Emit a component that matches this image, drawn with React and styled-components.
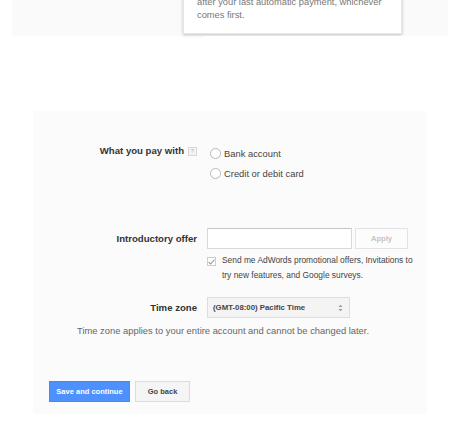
import React from "react"
import styled, { createGlobalStyle } from "styled-components"

const GlobalStyle = createGlobalStyle`
  html, body {
    margin: 0;
    padding: 0;
    background: #fff;
    font-family: "Liberation Sans", Arial, sans-serif;
    overflow: hidden;
  }
`

const Page = styled.div`
  width: 467px;
  height: 421px;
  display: flex;
  flex-direction: column;
`

const TopPanel = styled.div`
  margin-left: 12px;
  width: 436px;
  height: 36px;
  background: #fafafa;
  padding-left: 171px;
  box-sizing: border-box;
`

const Tooltip = styled.div`
  margin-top: -4px;
  width: 219px;
  box-sizing: border-box;
  padding: 0 10px 11px 13px;
  background: #fff;
  border: 1px solid #e6e6e6;
  border-top: none;
  box-shadow: 0 1px 3px rgba(0, 0, 0, 0.22);
  font-size: 9.3px;
  line-height: 13px;
  color: #777;
`

const Gap = styled.div`
  height: 75px;
  display: flex;
`

const HiddenCard = styled.div`
  margin-left: 203px;
  width: 223px;
  height: 75px;
  background: #fff;
  border-bottom: 1px solid #e2e2e2;
  box-shadow: 0 3px 2px -2px rgba(0, 0, 0, 0.2);
`

const Panel = styled.div`
  margin-left: 33px;
  width: 394px;
  height: 303px;
  background: #fbfbfb;
  box-sizing: border-box;
  padding-top: 32px;
  display: flex;
  flex-direction: column;
`

const Row = styled.div`
  display: flex;
  align-items: ${(p) => (p.$center ? "center" : "flex-start")};
  gap: 10px;
  margin-top: ${(p) => p.$top || 0}px;
`

const Label = styled.div`
  width: 164px;
  flex: none;
  display: flex;
  justify-content: flex-end;
  align-items: center;
  gap: 4px;
  font-size: 9.6px;
  font-weight: bold;
  line-height: 16px;
  color: #333;
`

const HelpIcon = styled.span`
  width: 7px;
  height: 7px;
  border: 1px solid #d8d8d8;
  background: #f3f3f3;
  color: #aaa;
  font-size: 5px;
  line-height: 7px;
  text-align: center;
  font-weight: normal;
`

const Options = styled.div`
  display: flex;
  flex-direction: column;
`

const Option = styled.label`
  height: 20px;
  display: flex;
  align-items: center;
  gap: 3px;
  padding-left: 3px;
  font-size: 9.4px;
  color: #444;
`

const Radio = styled.span`
  width: 9px;
  height: 9px;
  border: 1px solid #b8b8b8;
  border-radius: 50%;
  background: #fff;
`

const Input = styled.div`
  width: 145px;
  height: 21px;
  box-sizing: border-box;
  background: #fff;
  border: 1px solid #d9d9d9;
  border-top-color: #c6c6c6;
`

const ApplyButton = styled.div`
  margin-left: -7px;
  width: 53px;
  height: 21px;
  box-sizing: border-box;
  border: 1px solid #e3e3e3;
  background: #fcfcfc;
  color: #c4c4c4;
  font-size: 7.6px;
  font-weight: bold;
  display: flex;
  align-items: center;
  justify-content: center;
`

const CheckRow = styled.div`
  display: flex;
  margin-top: 4px;
  margin-left: 174px;
  gap: 6px;
`

const CheckBox = styled.span`
  flex: none;
  margin-top: 4px;
  width: 9px;
  height: 9px;
  box-sizing: border-box;
  border: 1px solid #cfcfcf;
  background: #fff;
  display: flex;
  align-items: center;
  justify-content: center;
`

const CheckText = styled.div`
  width: 196px;
  font-size: 8.4px;
  line-height: 15px;
  color: #444;
`

const Select = styled.div`
  width: 143px;
  height: 21px;
  box-sizing: border-box;
  padding: 0 6px 0 5px;
  background: #f4f4f4;
  border: 1px solid #dedede;
  display: flex;
  align-items: center;
  justify-content: space-between;
  font-size: 7.8px;
  font-weight: bold;
  color: #444;
`

const Note = styled.div`
  margin: 5px 0 0 44px;
  font-size: 9.4px;
  line-height: 15px;
  color: #666;
`

const Buttons = styled.div`
  display: flex;
  gap: 5px;
  margin: 43px 0 0 16px;
`

const Button = styled.div`
  height: 21px;
  box-sizing: border-box;
  padding: 0 ${(p) => (p.$primary ? 6 : 11)}px;
  display: flex;
  align-items: center;
  justify-content: center;
  white-space: nowrap;
  font-size: 7.5px;
  font-weight: bold;
  color: ${(p) => (p.$primary ? "#fff" : "#444")};
  background: ${(p) => (p.$primary ? "#4d90fe" : "#f5f5f5")};
  border: 1px solid ${(p) => (p.$primary ? "#4788f5" : "#dcdcdc")};
  min-width: ${(p) => (p.$primary ? 81 : 55)}px;
`

export default function App() {
  return (
    <Page>
      <GlobalStyle />
      <TopPanel>
        <Tooltip>
          after your last automatic payment, whichever
          <br />
          comes first.
        </Tooltip>
      </TopPanel>
      <Gap>
        <HiddenCard />
      </Gap>
      <Panel>
        <Row>
          <Label>
            What you pay with <HelpIcon>?</HelpIcon>
          </Label>
          <Options>
            <Option>
              <Radio /> Bank account
            </Option>
            <Option>
              <Radio /> Credit or debit card
            </Option>
          </Options>
        </Row>
        <Row $top={45} $center>
          <Label>Introductory offer</Label>
          <Input />
          <ApplyButton>Apply</ApplyButton>
        </Row>
        <CheckRow>
          <CheckBox>
            <svg width="7" height="6" viewBox="0 0 7 6">
              <path d="M0.6 3.2 L2.6 5 L6.4 0.6" fill="none" stroke="#9a9a9a" strokeWidth="1.1" />
            </svg>
          </CheckBox>
          <CheckText>
            Send me AdWords promotional offers, Invitations to try new features, and Google surveys.
          </CheckText>
        </CheckRow>
        <Row $top={14} $center>
          <Label>Time zone</Label>
          <Select>
            <span>(GMT-08:00) Pacific Time</span>
            <svg width="5" height="8" viewBox="0 0 5 8">
              <path d="M0.5 3 L2.5 0.8 L4.5 3 Z M0.5 5 L2.5 7.2 L4.5 5 Z" fill="#999" />
            </svg>
          </Select>
        </Row>
        <Note>Time zone applies to your entire account and cannot be changed later.</Note>
        <Buttons>
          <Button $primary>Save and continue</Button>
          <Button>Go back</Button>
        </Buttons>
      </Panel>
    </Page>
  )
}
